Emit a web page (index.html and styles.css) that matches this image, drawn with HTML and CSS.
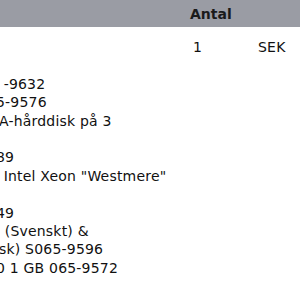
FILE: index.html
```html
<!DOCTYPE html>
<html>
<head>
  <meta charset="utf-8">
  <title>Beställning</title>
  <link rel="stylesheet" href="styles.css">
</head>
<body>
  <table class="order">
    <colgroup>
      <col class="col-desc">
      <col class="col-qty">
      <col class="col-price">
    </colgroup>
    <thead>
      <tr>
        <th></th>
        <th>Antal</th>
        <th></th>
      </tr>
    </thead>
    <tbody>
      <tr>
        <td class="desc">
          <div class="line"></div>
          <div class="line"></div>
          <div class="line">&nbsp;&thinsp;-9632</div>
          <div class="line">5-9576</div>
          <div class="line">&thinsp;A-hårddisk på 3</div>
          <div class="line"></div>
          <div class="line">89</div>
          <div class="line">&nbsp;&thinsp;Intel Xeon "Westmere"</div>
          <div class="line"></div>
          <div class="line">49</div>
          <div class="line">l (Svenskt) &amp;</div>
          <div class="line">&thinsp;sk) S065-9596</div>
          <div class="line">0 1 GB 065-9572</div>
        </td>
        <td class="qty">1</td>
        <td class="price">SEK</td>
      </tr>
    </tbody>
  </table>
</body>
</html>
```

FILE: styles.css
```css
body {
  margin: 0;
  width: 300px;
  height: 300px;
  overflow: hidden;
  background: white;
  font-family: "DejaVu Sans", "Liberation Sans", sans-serif;
  font-size: 14px;
  color: #111;
}

.order {
  border-collapse: collapse;
  table-layout: fixed;
  width: 420px;
  margin-left: -4px;
}

.col-desc { width: 194px; }
.col-qty { width: 68px; }
.col-price { width: 158px; }

.order th {
  background: #9a9ca4;
  height: 27px;
  padding: 0;
  text-align: left;
  font-weight: bold;
  color: #1a1a1a;
}

.order td {
  padding: 11px 0 0;
  vertical-align: top;
  line-height: 18.4px;
  letter-spacing: 0.2px;
  white-space: nowrap;
  overflow: hidden;
}

.desc .line {
  height: 18.4px;
}

.order td.qty {
  padding-left: 3px;
}
```
